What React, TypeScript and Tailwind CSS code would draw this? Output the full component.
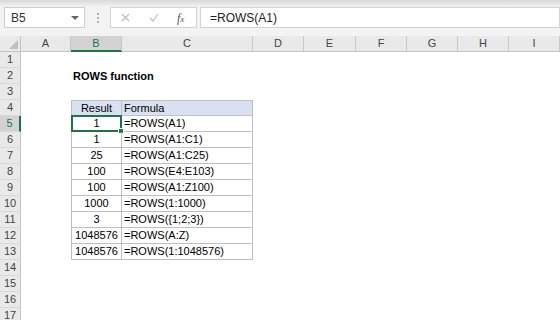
import { Fragment } from 'react'

const columns = [
  { key: 'A', w: 'w-[50px]' },
  { key: 'B', w: 'w-[51px]' },
  { key: 'C', w: 'w-[131px]' },
  { key: 'D', w: 'w-[51px]' },
  { key: 'E', w: 'w-[52px]' },
  { key: 'F', w: 'w-[51px]' },
  { key: 'G', w: 'w-[51px]' },
  { key: 'H', w: 'w-[51px]' },
  { key: 'I', w: 'w-[51px]' },
]

const rows = [
  { result: '1', formula: '=ROWS(A1)' },
  { result: '1', formula: '=ROWS(A1:C1)' },
  { result: '25', formula: '=ROWS(A1:C25)' },
  { result: '100', formula: '=ROWS(E4:E103)' },
  { result: '100', formula: '=ROWS(A1:Z100)' },
  { result: '1000', formula: '=ROWS(1:1000)' },
  { result: '3', formula: '=ROWS({1;2;3})' },
  { result: '1048576', formula: '=ROWS(A:Z)' },
  { result: '1048576', formula: '=ROWS(1:1048576)' },
]

function RowHeader({ n }: { n: number }) {
  const active = n === 5
  return (
    <div
      className={`h-4 flex items-center justify-center border-b border-[#d8d8d8] ${
        active
          ? 'bg-[#d3d3d3] text-[#217346] border-r-2 border-r-[#217346]'
          : 'bg-[#e9e9e9] text-[#444] border-r border-r-[#c4c4c4]'
      }`}
    >
      {n}
    </div>
  )
}

export default function App() {
  const sheetRows = Array.from({ length: 17 }, (_, i) => i + 1)

  return (
    <div className="w-[560px] h-[320px] overflow-hidden bg-white text-[11px] leading-none font-['Liberation_Sans',Arial,sans-serif]">
      {/* Formula bar */}
      <div className="h-9 bg-gradient-to-b from-[#d9d9d9] via-[#f3f3f3] via-[20%] to-[#f3f3f3] flex items-start pt-[7px] pl-1">
        <div className="w-[81px] h-[21px] bg-white border border-[#cdcdcd] flex items-center justify-between pl-[6px] pr-[5px] text-[12px] text-[#333]">
          <span>B5</span>
          <span className="w-0 h-0 border-l-[4px] border-r-[4px] border-t-[4px] border-l-transparent border-r-transparent border-t-[#666]" />
        </div>
        <div className="w-[25px] h-[21px] flex flex-col items-center justify-center gap-[2px]">
          <span className="w-[2px] h-[2px] bg-[#b0b0b0]" />
          <span className="w-[2px] h-[2px] bg-[#b0b0b0]" />
          <span className="w-[2px] h-[2px] bg-[#b0b0b0]" />
        </div>
        <div className="w-[87px] h-[21px] bg-white border border-[#d4d4d4] flex items-center">
          <svg className="ml-[10px]" width="9" height="9" viewBox="0 0 9 9">
            <path d="M1 1L8 8M8 1L1 8" stroke="#bdbdbd" strokeWidth="1.2" />
          </svg>
          <svg className="ml-[19px]" width="10" height="9" viewBox="0 0 10 9">
            <path d="M1 5L4 8L9 1" stroke="#bdbdbd" strokeWidth="1.2" fill="none" />
          </svg>
          <span className="ml-[18px] text-[12px] italic text-[#555] font-['Liberation_Serif',serif]">
            f<span className="text-[9px]">x</span>
          </span>
        </div>
        <div className="ml-[3px] flex-1 h-[21px] bg-white border border-[#d4d4d4] flex items-center pl-[9px] text-[12px] text-[#222]">
          =ROWS(A1)
        </div>
      </div>

      {/* Column headers */}
      <div className="flex h-4">
        <div className="w-[21px] bg-[#e9e9e9] border-r border-b border-[#c4c4c4] relative">
          <span className="absolute right-[2px] bottom-[2px] w-0 h-0 border-l-[9px] border-t-[9px] border-l-transparent border-t-transparent border-r-0 border-b-[9px] border-b-[#bdbdbd] hidden" />
          <svg className="absolute right-[2px] bottom-[2px]" width="9" height="9" viewBox="0 0 9 9">
            <path d="M9 0L9 9L0 9Z" fill="#bfbfbf" />
          </svg>
        </div>
        {columns.map((c) => (
          <div
            key={c.key}
            className={`${c.w} flex items-center justify-center border-r border-[#c8c8c8] ${
              c.key === 'B'
                ? 'bg-[#d3d3d3] text-[#217346] border-b-2 border-b-[#217346]'
                : 'bg-[#e9e9e9] text-[#444] border-b border-b-[#c4c4c4]'
            }`}
          >
            {c.key}
          </div>
        ))}
      </div>

      {/* Sheet */}
      <div className="grid grid-cols-[21px_50px_51px_131px_1fr] text-black">
        {sheetRows.map((n) => {
          const dataRow = n >= 5 && n <= 13 ? rows[n - 5] : null
          return (
            <Fragment key={n}>
              <RowHeader n={n} />
              <div className="h-4" />
              {n === 2 ? (
                <div className="h-4 col-span-2 flex items-center pl-[2px] font-bold">ROWS function</div>
              ) : n === 4 ? (
                <>
                  <div className="h-4 bg-[#d9e1f2] border border-[#bfbfbf] flex items-center justify-center">Result</div>
                  <div className="h-4 bg-[#d9e1f2] border-y border-r border-[#bfbfbf] flex items-center pl-[2px]">Formula</div>
                </>
              ) : dataRow ? (
                <>
                  <div className="h-4 border-x border-b border-[#bfbfbf] flex items-center justify-center relative">
                    {dataRow.result}
                    {n === 5 && (
                      <div className="absolute -left-px -top-px -right-px -bottom-px border-2 border-[#217346]">
                        <span className="absolute -right-[4px] -bottom-[4px] w-[6px] h-[6px] bg-[#217346] border border-white" />
                      </div>
                    )}
                  </div>
                  <div className="h-4 border-r border-b border-[#bfbfbf] flex items-center pl-[2px]">{dataRow.formula}</div>
                </>
              ) : (
                <>
                  <div className="h-4" />
                  <div className="h-4" />
                </>
              )}
              <div className="h-4" />
            </Fragment>
          )
        })}
      </div>
    </div>
  )
}
